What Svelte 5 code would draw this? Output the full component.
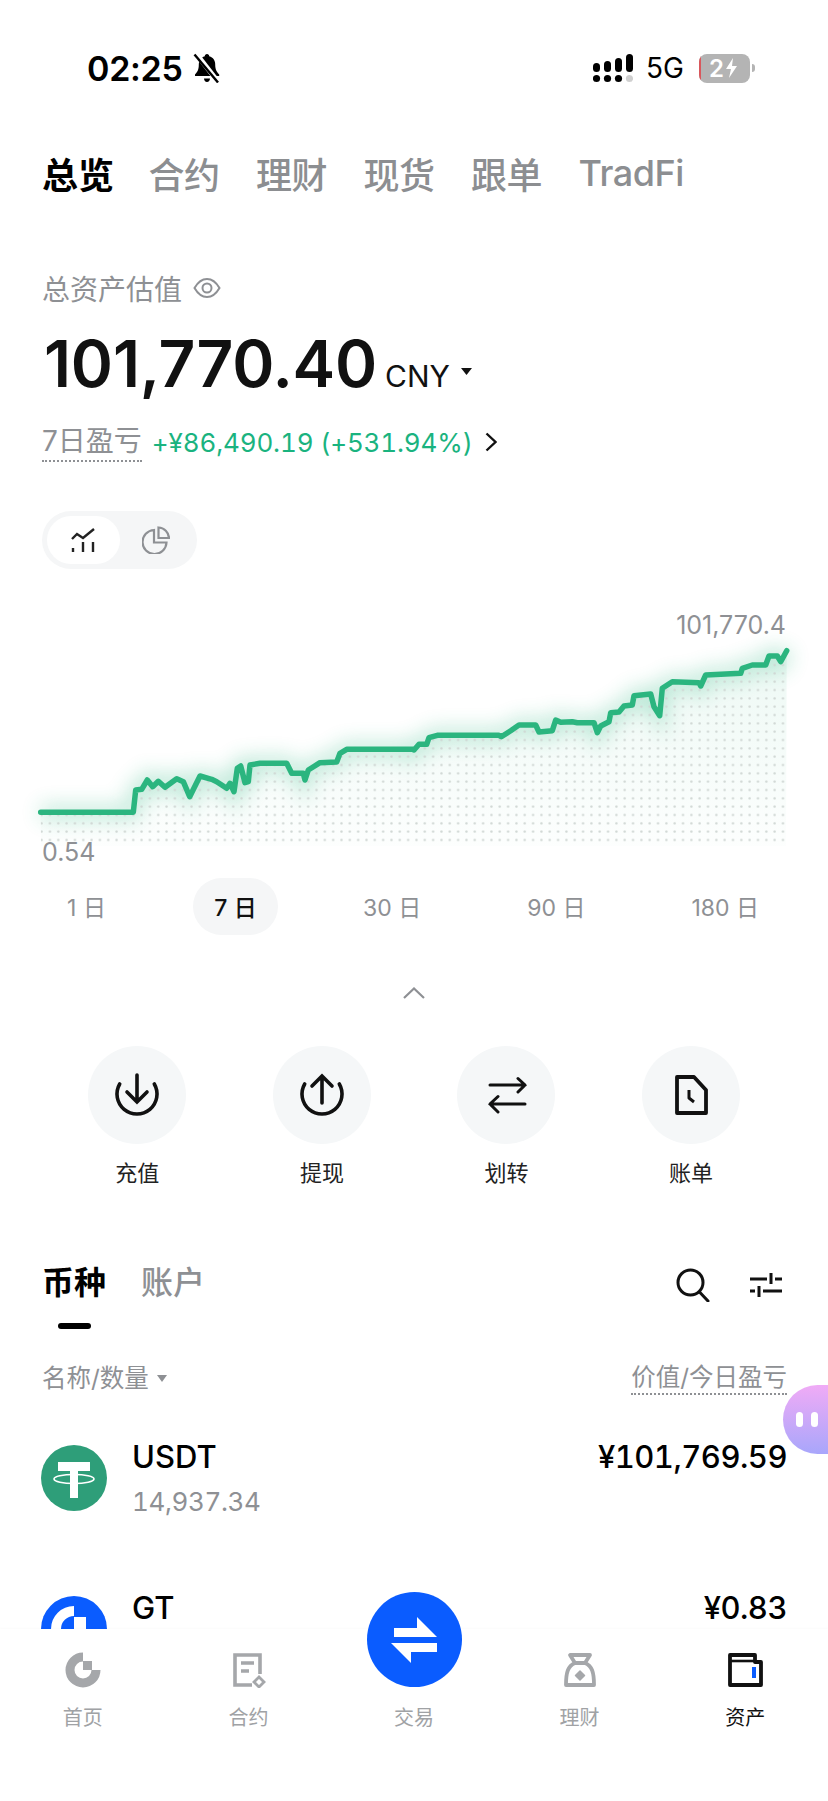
<script>
  // chart points were read off the reference, page coordinates are [x, y]
  const left = [[122,607],[400,607],[407,540],[425,538],[442,510],[458,530],[475,514],[495,532],[530,506],[550,515],[569,560],[600,498],[635,508],[650,515],[680,535],[690,520],[702,545],[712,475],[722,468],[735,518],[745,515],[750,465],[780,460],[860,460],[875,490],[910,490],[915,510],[925,480],[960,458],[1010,456],[1020,430],[1040,418],[1242,418]];
  const right = [[0,420],[15,403],[38,403],[45,383],[70,376],[255,376],[262,380],[290,362],[315,345],[365,345],[375,366],[415,362],[425,330],[440,337],[475,335],[490,338],[540,338],[550,368],[560,348],[585,335],[590,308],[615,306],[630,288],[655,285],[660,257],[710,252],[720,290],[737,317],[745,235],[775,215],[855,218],[860,228],[875,195],[980,190],[985,175],[1015,165],[1055,165],[1065,138],[1090,138],[1100,155],[1118,122]];
  const pts = [
    ...left.map(([x, y]) => [x / 3, 610 + y / 3]),
    ...right.map(([x, y]) => [414 + x / 3, 610 + y / 3])
  ];
  const line = pts.map((p) => p[0].toFixed(1) + ',' + p[1].toFixed(1)).join(' ');
  const area = line + ' 786,846 41,846';

  const tabs = ['合约', '理财', '现货', '跟单', 'TradFi'];
  const ranges = ['1 日', '7 日', '30 日', '90 日', '180 日'];
</script>

<div class="page">
  <div class="status">
    <span class="time">02:25</span>
    <svg class="bell" width="28" height="30" viewBox="0 0 28 30">
      <path d="M14 1c1.400 0 2.200 1 2.200 2.200 4 1 6 4.300 6 8.300 0 5 1.500 7.500 4 10v1.500H2v-1.500c2.500-2.500 3.800-5 3.800-10 0-4 2-7.300 6-8.300C11.800 2 12.600 1 14 1zM11 25.500h6c0 1.800-1.300 3.500-3 3.500s-3-1.700-3-3.500z" fill="#000"/>
      <path d="M3 0.500 L26 30" stroke="#fff" stroke-width="5"/>
      <path d="M1.500 1.500 L25 29.500" stroke="#000" stroke-width="2.400"/>
    </svg>
    <span class="grow"></span>
    <svg width="40" height="29" viewBox="0 0 40 29">
      <g fill="#000">
        <rect x="0" y="9" width="7" height="9" rx="3.500"/>
        <rect x="11" y="7" width="7" height="11" rx="3.500"/>
        <rect x="22" y="4" width="7" height="14" rx="3.500"/>
        <rect x="33" y="0" width="7" height="18" rx="3.500"/>
        <circle cx="3.500" cy="24.500" r="3.600"/>
        <circle cx="14.500" cy="24.500" r="3.600"/>
        <circle cx="25.500" cy="24.500" r="3.600"/>
      </g>
      <circle cx="36.500" cy="24.500" r="3.600" fill="#cfcfcf"/>
    </svg>
    <span class="net">5G</span>
    <div class="battery">
      <span class="low"></span>
      <span class="charge">2</span>
      <svg width="13" height="20" viewBox="0 0 13 20"><path d="M8 0 1 11h5l-2 9 8-12H7z" fill="#fff"/></svg>
    </div>
    <span class="nub"></span>
  </div>

  <div class="tabs">
    <span class="tab on">总览</span>
    {#each tabs as t}
      <span class="tab">{t}</span>
    {/each}
  </div>

  <div class="label">
    总资产估值
    <svg width="28" height="22" viewBox="0 0 28 22" fill="none" stroke="#8e9094" stroke-width="2">
      <path d="M1.500 11C5 5 9 2 14 2s9 3 12.500 9C23 17 19 20 14 20S5 17 1.500 11z"/>
      <circle cx="14" cy="11" r="4.500"/>
    </svg>
  </div>

  <div class="amount">
    <span class="big">101,770.40</span>
    <span class="cur">CNY</span>
    <svg class="caret" width="11" height="7" viewBox="0 0 11 7"><path d="M0 0h11L5.500 7z" fill="#111"/></svg>
  </div>

  <div class="pnl">
    <span class="dotted">7日盈亏</span>
    <span class="gain">+¥86,490.19 (+531.94%)</span>
    <svg width="12" height="20" viewBox="0 0 12 20" fill="none" stroke="#111" stroke-width="2.400"><path d="M1.500 1.500 10.500 10l-9 8.500"/></svg>
  </div>

  <div class="toggle">
    <div class="opt on">
      <svg width="25" height="25" viewBox="0 0 25 25" fill="none" stroke="#222" stroke-width="2.400">
        <path d="M1 11 6 6l6 4L23 1"/>
        <path d="M2 20v4M12 14v10M22 14v10"/>
      </svg>
    </div>
    <div class="opt">
      <svg width="28" height="28" viewBox="0 0 28 28" fill="none" stroke="#8e9094" stroke-width="2.200">
        <path d="M12 4a12 12 0 1 0 12.500 12.500H12z"/>
        <path d="M16.500 1.500v10.500H27A11 11 0 0 0 16.500 1.500z"/>
      </svg>
    </div>
  </div>

  <div class="chart">
    <svg width="828" height="270" viewBox="0 600 828 270">
      <defs>
        <pattern id="dots" patternUnits="userSpaceOnUse" width="8.330" height="8.330" x="778.800" y="835.800">
          <circle cx="4.170" cy="4.170" r="1.200" fill="#cfd6d3"/>
        </pattern>
        <linearGradient id="fade" gradientUnits="userSpaceOnUse" x1="0" y1="640" x2="0" y2="850">
          <stop offset="0" stop-color="#2bb57f" stop-opacity=".09"/>
          <stop offset="1" stop-color="#2bb57f" stop-opacity=".01"/>
        </linearGradient>
        <filter id="glow" x="-10%" y="-40%" width="120%" height="180%">
          <feGaussianBlur stdDeviation="10"/>
        </filter>
      </defs>
      <polyline points={line} fill="none" stroke="#2bb57f" stroke-width="14" opacity=".3" filter="url(#glow)"/>
      <polygon points={area} fill="url(#fade)"/>
      <polygon points={area} fill="url(#dots)"/>
      <polyline points={line} fill="none" stroke="#2bb57f" stroke-width="5.500" stroke-linecap="round" stroke-linejoin="round"/>
    </svg>
    <span class="high">101,770.4</span>
    <span class="low-val">0.54</span>
  </div>

  <div class="ranges">
    {#each ranges as r, i}
      <span class="range" class:on={i === 1}>{r}</span>
    {/each}
  </div>

  <svg class="collapse" width="22" height="12" viewBox="0 0 22 12" fill="none" stroke="#8e9094" stroke-width="2.200"><path d="M1 11 11 1.500 21 11"/></svg>

  <div class="actions">
    <div class="action">
      <div class="circle">
        <svg width="98" height="98" viewBox="0 0 98 98" fill="none" stroke="#111" stroke-width="3.600" stroke-linecap="round">
          <path d="M31.700 38A20 20 0 1 0 66.300 38"/>
          <path d="M49 29v27M39 46l10 10 10-10"/>
        </svg>
      </div>
      <span>充值</span>
    </div>
    <div class="action">
      <div class="circle">
        <svg width="98" height="98" viewBox="0 0 98 98" fill="none" stroke="#111" stroke-width="3.600" stroke-linecap="round">
          <path d="M31.700 38A20 20 0 1 0 66.300 38"/>
          <path d="M49 57V30M39 40l10-10 10 10"/>
        </svg>
      </div>
      <span>提现</span>
    </div>
    <div class="action">
      <div class="circle">
        <svg width="98" height="98" viewBox="0 0 98 98" fill="none" stroke="#111" stroke-width="3" stroke-linecap="round">
          <path d="M33 39h35M61 32.500l7 6.500-7 7"/>
          <path d="M68 58H33M41 50.500 33 58l8 8"/>
        </svg>
      </div>
      <span>划转</span>
    </div>
    <div class="action">
      <div class="circle">
        <svg width="98" height="98" viewBox="0 0 98 98" fill="none" stroke="#111" stroke-width="3.800" stroke-linejoin="round">
          <path d="M35 31h17l12 13v23H35z"/>
          <path d="M47 44v8l5 4" stroke-width="3"/>
        </svg>
      </div>
      <span>账单</span>
    </div>
  </div>

  <div class="section">
    <div class="sec-tab on">币种<i></i></div>
    <div class="sec-tab">账户</div>
    <span class="grow"></span>
    <svg class="search" width="34" height="34" viewBox="0 0 34 34" fill="none" stroke="#111" stroke-width="3" stroke-linecap="round">
      <circle cx="14.500" cy="14.500" r="12.500"/>
      <path d="M23.500 24 32 33"/>
    </svg>
    <svg class="sliders" width="32" height="26" viewBox="0 0 32 26" fill="none" stroke="#111" stroke-width="3">
      <path d="M0 7h17M25 7h7M21 1v11"/>
      <path d="M0 19h5M13 19h19M9 14v11"/>
    </svg>
  </div>

  <div class="columns">
    <span class="col">名称/数量
      <svg width="10" height="7" viewBox="0 0 10 7"><path d="M0 0h10L5 7z" fill="#8e9094"/></svg>
    </span>
    <span class="col dotted">价值/今日盈亏</span>
  </div>

  <div class="list">
    <div class="row">
      <svg class="coin" width="66" height="66" viewBox="0 0 66 66">
        <circle cx="33" cy="33" r="33" fill="#2e9e79"/>
        <path d="M17 17h32v9H37v27h-8V26H17z" fill="#fff"/>
        <ellipse cx="33" cy="34" rx="20" ry="4.500" fill="none" stroke="#fff" stroke-width="1.600"/>
      </svg>
      <div class="info">
        <div class="name">USDT</div>
        <div class="qty">14,937.34</div>
      </div>
      <div class="value">¥101,769.59</div>
    </div>
    <div class="row">
      <svg class="coin" width="66" height="66" viewBox="0 0 66 66">
        <circle cx="33" cy="33" r="33" fill="#0a5cff"/>
        <path d="M15 33A18 18 0 0 1 33 15" fill="none" stroke="#fff" stroke-width="10"/>
        <rect x="33" y="21" width="12" height="12" fill="#fff"/>
      </svg>
      <div class="info">
        <div class="name">GT</div>
      </div>
      <div class="value">¥0.83</div>
    </div>
  </div>

  <div class="assistant">
    <i></i><i></i>
  </div>

  <nav class="nav">
    <div class="fab">
      <svg width="95" height="95" viewBox="0 0 95 95">
        <path d="M27 36h23V25l20 20H27zM70 51v9H44v11L24 51z" fill="#fff"/>
      </svg>
    </div>
    <div class="nav-item">
      <svg width="36" height="36" viewBox="0 0 36 36" fill="none">
        <path d="M18 5A13 13 0 1 0 31 18" stroke="#a5a7aa" stroke-width="9"/>
        <rect x="18" y="9" width="9" height="9" fill="#a5a7aa"/>
      </svg>
      <span>首页</span>
    </div>
    <div class="nav-item">
      <svg width="36" height="36" viewBox="0 0 36 36" fill="none" stroke="#a5a7aa" stroke-width="3.600">
        <path d="M30 22V3H5v30h17"/>
        <path d="M11 11h13M11 19h8"/>
        <path d="M29 25l5 5-5 5-5-5z" stroke-width="2.800"/>
      </svg>
      <span>合约</span>
    </div>
    <div class="nav-item">
      <span class="spacer"></span>
      <span>交易</span>
    </div>
    <div class="nav-item">
      <svg width="36" height="36" viewBox="0 0 36 36" fill="none" stroke="#a5a7aa" stroke-width="3.800" stroke-linejoin="round">
        <path d="M8 3h20l-5 8H13z"/>
        <path d="M13 11C6 14 4 20 4 33h28c0-13-2-19-9-22"/>
        <path d="M18 19l4.500 4.500L18 28l-4.500-4.500z" fill="#a5a7aa" stroke-width="1.500"/>
      </svg>
      <span>理财</span>
    </div>
    <div class="nav-item active">
      <svg width="36" height="36" viewBox="0 0 36 36" fill="none">
        <path d="M3 8V3h25v7h6v23H3z" stroke="#111" stroke-width="3.800" stroke-linejoin="round"/>
        <path d="M3 9h25" stroke="#111" stroke-width="2.600"/>
        <rect x="25" y="15" width="4" height="11" fill="#0a5cff"/>
      </svg>
      <span>资产</span>
    </div>
  </nav>
</div>

<style>
  :global(body) {
    margin: 0;
    background: #fff;
  }
  .page {
    position: relative;
    width: 828px;
    height: 1801px;
    overflow: hidden;
    background: #fff;
    color: #111;
    font-family: Inter, "Noto Sans CJK SC", sans-serif;
  }
  .grow {
    flex: 1;
  }
  svg {
    display: block;
    flex: none;
  }

  .status {
    box-sizing: border-box;
    height: 100px;
    padding: 36px 73px 0 87px;
    display: flex;
    align-items: center;
  }
  .time {
    font-size: 34px;
    font-weight: 600;
    color: #000;
    letter-spacing: -0.3px;
  }
  .bell {
    margin-left: 10px;
  }
  .net {
    margin: 0 15px 0 13px;
    font-size: 28px;
    color: #000;
  }
  .battery {
    position: relative;
    box-sizing: border-box;
    width: 51px;
    height: 29px;
    padding-left: 10px;
    border-radius: 8px;
    background: #b4b4b4;
    display: flex;
    align-items: center;
    gap: 1px;
    overflow: hidden;
  }
  .low {
    position: absolute;
    left: 0;
    top: 0;
    bottom: 0;
    width: 2px;
    background: #d9575c;
  }
  .charge {
    font-size: 24px;
    font-weight: 600;
    color: #fff;
  }
  .nub {
    width: 3px;
    height: 8px;
    margin-left: 2px;
    border-radius: 0 3px 3px 0;
    background: #b4b4b4;
  }

  .tabs {
    height: 144px;
    padding: 2px 0 0 42px;
    box-sizing: border-box;
    display: flex;
    align-items: center;
    gap: 36.500px;
  }
  .tab {
    font-size: 36px;
    font-weight: 500;
    letter-spacing: -0.5px;
    color: #8c8e91;
  }
  .tab.on {
    margin-right: -2px;
    font-weight: 700;
    letter-spacing: 0;
    color: #000;
  }

  .label {
    margin-top: 22px;
    height: 44px;
    padding-left: 42px;
    display: flex;
    align-items: center;
    gap: 11px;
    font-size: 28px;
    color: #8e9094;
  }

  .amount {
    margin-top: 22px;
    height: 64px;
    padding-left: 44px;
    display: flex;
    align-items: baseline;
  }
  .big {
    font-size: 64px;
    line-height: 64px;
    font-weight: 600;
    letter-spacing: -0.2px;
  }
  .cur {
    margin-left: 8px;
    font-size: 30px;
    font-weight: 400;
  }
  .caret {
    margin-left: 11px;
    align-self: center;
    margin-top: 14px;
  }

  .pnl {
    margin-top: 27px;
    height: 38px;
    padding-left: 42px;
    display: flex;
    align-items: center;
    font-size: 26px;
  }
  .dotted {
    border-bottom: 2px dotted #8e9094;
    color: #8e9094;
  }
  .pnl .dotted {
    font-size: 28px;
    line-height: 38px;
  }
  .gain {
    margin-left: 10px;
    margin-right: 12px;
    color: #1ab37f;
    letter-spacing: -0.15px;
    font-variant-numeric: tabular-nums;
  }

  .toggle {
    box-sizing: border-box;
    width: 155px;
    height: 58px;
    margin: 50px 0 0 42px;
    padding: 5px;
    border-radius: 29px;
    background: #f5f6f7;
    display: flex;
  }
  .opt {
    width: 73px;
    border-radius: 24px;
    display: flex;
    align-items: center;
    justify-content: center;
  }
  .opt.on {
    background: #fff;
  }

  .chart {
    position: relative;
    height: 270px;
    margin-top: 31px;
  }
  .high,
  .low-val {
    position: absolute;
    font-size: 25px;
    line-height: 30px;
    color: #8e9094;
  }
  .high {
    right: 42px;
    top: 10px;
  }
  .low-val {
    left: 42px;
    top: 237px;
  }

  .ranges {
    height: 57px;
    margin-top: 8px;
    padding-left: 44px;
    display: flex;
    align-items: center;
    gap: 64px;
  }
  .range {
    box-sizing: border-box;
    min-width: 85px;
    height: 57px;
    padding: 0 21px 2px;
    border-radius: 29px;
    display: flex;
    align-items: center;
    justify-content: center;
    font-size: 23px;
    color: #8e9094;
  }
  .range.on {
    background: #f5f6f7;
    color: #111;
    font-weight: 500;
  }

  .collapse {
    margin: 52px auto 0;
  }

  .actions {
    margin-top: 47px;
    padding-left: 45px;
    display: grid;
    grid-template-columns: repeat(4, 184.600px);
  }
  .action {
    display: flex;
    flex-direction: column;
    align-items: center;
    font-size: 22px;
    color: #222;
  }
  .action span {
    margin-top: 12px;
    line-height: 34px;
  }
  .circle {
    width: 98px;
    height: 98px;
    border-radius: 50%;
    background: #f5f7f8;
  }

  .section {
    margin-top: 69px;
    padding: 0 46px 0 42px;
    height: 102px;
    display: flex;
    align-items: flex-start;
  }
  .sec-tab {
    font-size: 32px;
    line-height: 48px;
    font-weight: 500;
    color: #8e9094;
    margin-right: 35px;
  }
  .sec-tab.on {
    font-weight: 700;
    color: #000;
  }
  .sec-tab i {
    display: block;
    width: 33px;
    height: 6px;
    margin: 16px auto 0;
    border-radius: 3px;
    background: #000;
  }
  .search {
    margin: 9px 40px 0 0;
  }
  .sliders {
    margin-top: 13px;
  }

  .columns {
    height: 34px;
    padding: 0 41px 0 42px;
    display: flex;
    justify-content: space-between;
    font-size: 24.500px;
    line-height: 33px;
    color: #8e9094;
  }
  .col {
    display: flex;
    align-items: center;
    gap: 8px;
  }

  .list {
    margin-top: 42px;
    padding: 0 41px;
  }
  .row {
    height: 151px;
    display: flex;
    align-items: flex-start;
  }
  .coin {
    margin-top: 8px;
  }
  .info {
    margin-left: 25px;
    flex: 1;
  }
  .name,
  .value {
    font-size: 31px;
    line-height: 40px;
    font-weight: 500;
    color: #000;
  }
  .value {
    font-variant-numeric: tabular-nums;
    letter-spacing: -0.5px;
  }
  .qty {
    margin-top: 7px;
    font-size: 26px;
    line-height: 36px;
    color: #8e9094;
    letter-spacing: -0.4px;
    font-variant-numeric: tabular-nums;
  }

  .assistant {
    position: absolute;
    left: 783px;
    top: 1385px;
    width: 45px;
    height: 69px;
    border-radius: 35px 0 0 35px;
    background: linear-gradient(#f0abf6, #a8a6fb);
    display: flex;
    align-items: center;
    gap: 8px;
    padding-left: 13px;
    box-sizing: border-box;
  }
  .assistant i {
    width: 7px;
    height: 15px;
    border-radius: 4px;
    background: #fff;
  }

  .nav {
    position: absolute;
    left: 0;
    right: 0;
    top: 1629px;
    height: 172px;
    box-sizing: border-box;
    padding-top: 23px;
    background: #fff;
    box-shadow: 0 -1px 2px rgba(0, 0, 0, 0.02);
    display: grid;
    grid-template-columns: repeat(5, 1fr);
  }
  .nav-item {
    display: flex;
    flex-direction: column;
    align-items: center;
    font-size: 20px;
    color: #a0a2a5;
  }
  .nav-item span:last-child {
    margin-top: 16px;
    line-height: 28px;
  }
  .nav-item.active {
    color: #111;
  }
  .spacer {
    height: 36px;
  }
  .fab {
    position: absolute;
    left: 367px;
    top: -37px;
    width: 95px;
    height: 95px;
    border-radius: 50%;
    background: #0a5cff;
  }
</style>
